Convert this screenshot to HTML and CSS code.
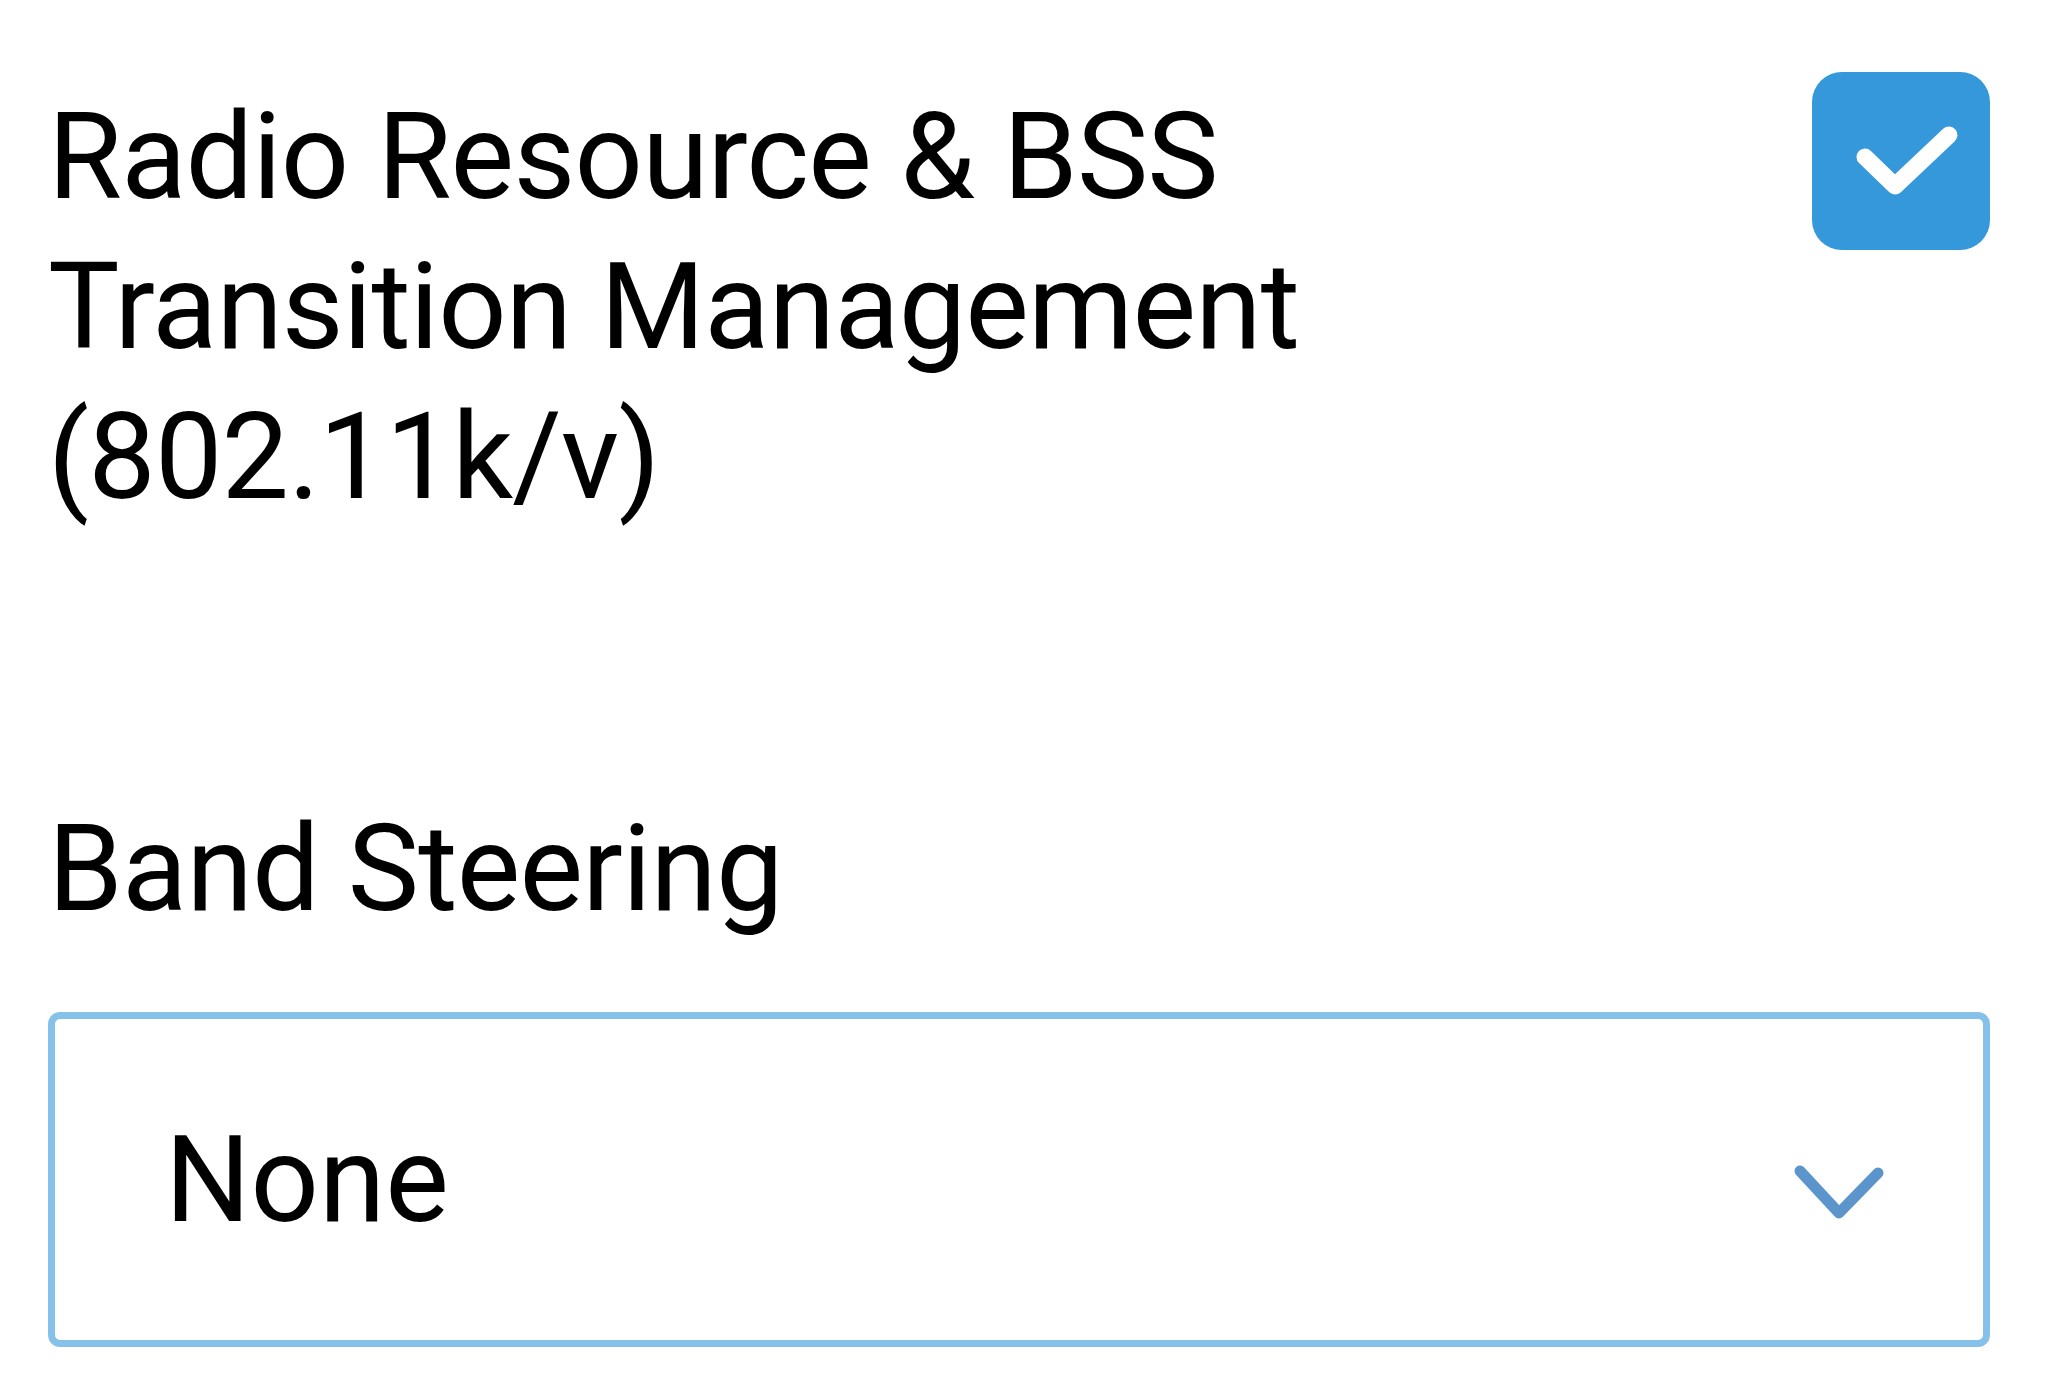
FILE: index.html
```html
<!DOCTYPE html>
<html lang="en">
<head>
  <meta charset="UTF-8">
  <title>Wireless Settings</title>
  <link rel="stylesheet" href="styles.css">
</head>
<body>

<div class="settings">
  <div class="setting-row">
    <label class="setting-label" for="rrm">Radio Resource &amp; BSS Transition Management (802.11k/v)</label>
    <div class="checkbox" id="rrm">
      <svg width="178" height="178" viewBox="0 0 178 178">
        <rect x="0" y="0" width="178" height="178" rx="30" fill="#3498db"/>
        <polyline points="53,85 83,114 137,63" fill="none" stroke="#fff" stroke-width="17" stroke-linecap="round" stroke-linejoin="round"/>
      </svg>
    </div>
  </div>

  <div class="setting-block">
    <div class="setting-label">Band Steering</div>
    <div class="select-box">
      <span class="select-value">None</span>
      <svg class="chevron" width="92" height="58" viewBox="0 0 92 58">
        <polyline points="7,6 46,48 85,8" fill="none" stroke="#5b95cb" stroke-width="11" stroke-linecap="round" stroke-linejoin="round"/>
      </svg>
    </div>
  </div>
</div>

</body>
</html>
```

FILE: styles.css
```css
body {
  margin: 0;
  font-family: Roboto, 'Noto Sans', sans-serif;
  background-color: #fff;
  color: #000;
}

.settings {
  padding: 72px 58px 0 48px;
}

.setting-row {
  display: flex;
  justify-content: space-between;
  align-items: flex-start;
}

.setting-label {
  font-size: 120px;
  line-height: 150px;
  letter-spacing: -0.8px;
}

.setting-row .setting-label {
  flex: 0 1 1400px;
  padding-top: 10px;
}

.checkbox {
  width: 178px;
  height: 178px;
  flex-shrink: 0;
}

.checkbox svg {
  display: block;
}

.setting-block {
  margin-top: 262px;
}

.select-box {
  margin-top: 68px;
  height: 335px;
  box-sizing: border-box;
  border: 7.5px solid #85c1e9;
  border-radius: 12px;
  display: flex;
  align-items: center;
  justify-content: space-between;
  padding: 0 98px 0 110px;
}

.select-value {
  font-size: 120px;
  line-height: 150px;
}

.chevron {
  display: block;
  margin-top: 28px;
}
```
